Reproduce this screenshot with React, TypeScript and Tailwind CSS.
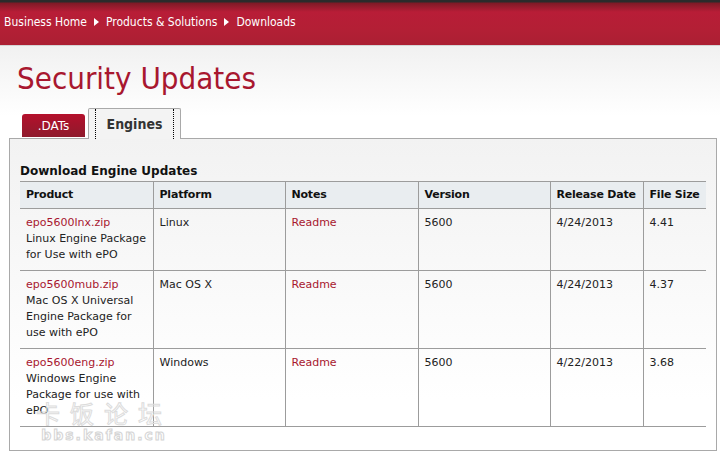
const rows = [
  {
    file: "epo5600lnx.zip",
    desc: "Linux Engine Package for Use with ePO",
    platform: "Linux",
    version: "5600",
    date: "4/24/2013",
    size: "4.41",
  },
  {
    file: "epo5600mub.zip",
    desc: "Mac OS X Universal Engine Package for use with ePO",
    platform: "Mac OS X",
    version: "5600",
    date: "4/24/2013",
    size: "4.37",
  },
  {
    file: "epo5600eng.zip",
    desc: "Windows Engine Package for use with ePO",
    platform: "Windows",
    version: "5600",
    date: "4/22/2013",
    size: "3.68",
  },
];

function Caret() {
  return (
    <svg width="5" height="8" viewBox="0 0 5 8" className="mx-[7px]">
      <path d="M0 0 L5 4 L0 8 Z" fill="#fff" />
    </svg>
  );
}

export default function App() {
  return (
    <div className="relative w-[720px] h-[452px] overflow-hidden bg-white font-['DejaVu_Sans',sans-serif] text-[11px] text-[#222]">
      <header className="h-[46px] border-b border-[#d4d4d4] bg-[linear-gradient(#2b2b2b_0px,#2b2b2b_2px,#7e1a26_3px,#b81d37_12px,#b31f35_30px,#ac1f33_44px)] flex items-center px-1 text-white text-[12px] pb-[1px] font-['DejaVu_Sans_Condensed',sans-serif]">
        <span>Business Home</span>
        <Caret />
        <span>Products &amp; Solutions</span>
        <Caret />
        <span>Downloads</span>
      </header>

      <div className="bg-[linear-gradient(#f1f1f1,#ffffff_70px)] pt-[14px]">
        <h1 className="pl-[17px] text-[31px] leading-[36px] text-[#a8172f] font-['DejaVu_Sans_Condensed',sans-serif]">
          Security Updates
        </h1>

        <div className="flex items-end pl-[22px] mt-[11px] h-[31px]">
          <div className="w-[63px] h-[23px] rounded-t-[3px] bg-[linear-gradient(#b4102c,#8e1a2c)] text-white text-[12px] flex items-center justify-center mb-[1px]">
            .DATs
          </div>
          <div className="ml-[3px] w-[93px] h-[31px] border border-b-0 border-[#a9a9a9] rounded-t-[2px] bg-[#f3f3f3] flex items-center justify-between px-[6px] relative top-[1px]">
            <div className="w-0 h-full border-l border-dotted border-black" />
            <span className="text-[14px] font-bold text-[#333] font-['DejaVu_Sans_Condensed',sans-serif]">Engines</span>
            <div className="w-0 h-full border-l border-dotted border-black" />
          </div>
        </div>
      </div>

      <div className="mx-[9px] w-[708px] h-[313px] border border-[#a9a9a9] bg-[linear-gradient(#f2f2f2,#ffffff_260px)] px-[10px] pt-[25px]">
        <div className="font-bold text-[12px] text-[#111] leading-[14px] mb-[3px]">Download Engine Updates</div>
        <table className="table-fixed border-collapse w-[686px]">
          <colgroup>
            <col className="w-[133px]" />
            <col className="w-[132px]" />
            <col className="w-[133px]" />
            <col className="w-[132px]" />
            <col className="w-[93px]" />
            <col className="w-[63px]" />
          </colgroup>
          <thead>
            <tr className="bg-[#e9edf0] h-[27px] border-y border-[#9c9c9c]">
              {["Product", "Platform", "Notes", "Version", "Release Date", "File Size"].map((h, i) => (
                <th
                  key={h}
                  className={`text-left font-bold text-[#111] pl-[6px] pr-0 py-0 text-[11px] whitespace-nowrap tracking-[-0.2px] ${i > 0 ? "border-l border-[#9c9c9c]" : ""}`}
                >
                  {h}
                </th>
              ))}
            </tr>
          </thead>
          <tbody>
            {rows.map((r) => (
              <tr key={r.file} className="border-b border-[#9c9c9c] align-top leading-[16px]">
                <td className="px-[6px] pt-[6px] pb-[7px]">
                  <div className="text-[#a8172f]">{r.file}</div>
                  <div>{r.desc}</div>
                </td>
                <td className="px-[6px] pt-[6px] border-l border-[#9c9c9c]">{r.platform}</td>
                <td className="px-[6px] pt-[6px] border-l border-[#9c9c9c] text-[#a8172f]">Readme</td>
                <td className="px-[6px] pt-[6px] border-l border-[#9c9c9c]">{r.version}</td>
                <td className="px-[6px] pt-[6px] border-l border-[#9c9c9c]">{r.date}</td>
                <td className="px-[6px] pt-[6px] border-l border-[#9c9c9c]">{r.size}</td>
              </tr>
            ))}
          </tbody>
        </table>
      </div>

      <div className="absolute left-[36px] top-[400px] pointer-events-none select-none text-center">
        <div className="text-[24px] leading-[26px] tracking-[10px] text-transparent [-webkit-text-stroke:1px_#dcdcdc] font-['Noto_Sans_CJK_SC',sans-serif]">
          卡饭论坛
        </div>
        <div className="text-[14px] leading-[18px] tracking-[2px] text-transparent [-webkit-text-stroke:1px_#d4d4d4] font-bold font-['DejaVu_Sans',sans-serif]">
          bbs.kafan.cn
        </div>
      </div>
    </div>
  );
}
